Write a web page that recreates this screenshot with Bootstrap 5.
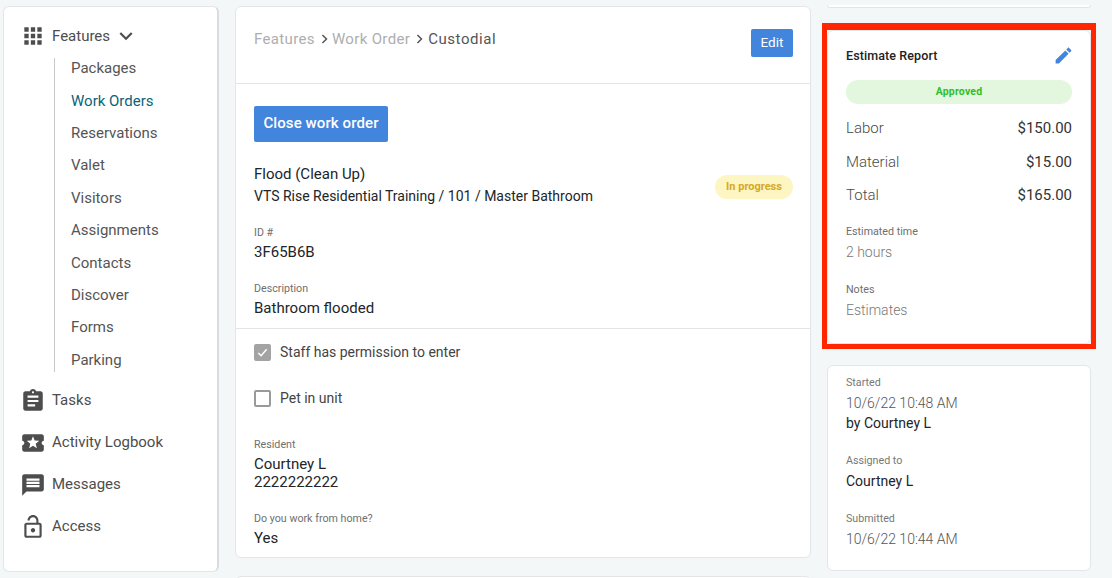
<!DOCTYPE html>
<html lang="en">
<head>
<meta charset="UTF-8">
<title>Work Order</title>
<link href="https://cdn.jsdelivr.net/npm/bootstrap@5.3.0/dist/css/bootstrap.min.css" rel="stylesheet">
<style>
html, body { height: 578px; overflow: hidden; }
body { background: #f4f7f8; font-family: Roboto, "Liberation Sans", sans-serif; font-size: 15px; color: #212529; }
.page-wrap { padding: 6px 0 0 3px; gap: 16px; height: 578px; overflow: hidden; }
.card { border-color: #e3e6e8; border-radius: 6px; }

.side-col { width: 216px; height: 566px; flex: none; border-right: 2px solid #d8dcde; }
.side-nav { padding: 17px 0 0 16px; }
.side-item { display: flex; align-items: center; gap: 6px; height: 24px; color: #4d4d4d; margin-bottom: 18px; }
.side-item svg { fill: #4d4d4d; width: 26px; height: 26px; flex: none; }
.side-item.open { margin-bottom: 0; }
.side-item.open svg.chev { margin-left: -3px; }
.sub-list { margin: 10.2px 0 17px 34px; padding-left: 16px; border-left: 1px solid #c4c8ca; list-style: none; }
.sub-list li { height: 32.4px; line-height: 20px; color: #555; }
.sub-list li:last-child { height: 22px; }
.sub-list li.current { color: #0b6379; }

.main-col { width: 576px; flex: none; }
.main-card { height: 552px; }
.crumb-bar { height: 77px; padding: 22px 17px 0 18px; border-bottom: 1px solid #e3e6e8; }
.crumb { line-height: 22px; margin-top: -1px; color: #aeaeae; letter-spacing: .35px; display: flex; align-items: center; gap: 4px; }
.crumb b { font-weight: 400; color: #555; letter-spacing: .55px; margin-left: 1px; }
.crumb svg { width: 10px; height: 10px; fill: #555; margin-right: -1px; }
.btn-blue { background: #4285dc; border: 0; color: #fff; border-radius: 2px; }
.btn-edit { width: 42px; height: 28px; font-size: 13.5px; padding: 0 0 2px; }
.btn-close-wo { width: 134px; height: 36px; padding: 0 0 2px; font-size: 15px; font-weight: 500; letter-spacing: .1px; }
.body-top { padding: 22px 17px 0 18px; height: 244px; }
.wo-title { margin-top: 22px; }
.wo-title .t1 { line-height: 20px; }
.wo-title .t2 { line-height: 22px; font-size: 14px; margin-top: 1px; }
.pill-wait { width: 78px; height: 24px; background: #fdf6c3; color: #d8a822; font-size: 11px; font-weight: 700; border-radius: 12px; margin-top: 11px; display: flex; align-items: center; justify-content: center; }
.lbl { font-size: 10.7px; color: #6f6f6f; line-height: 14px; }
.val { line-height: 20px; margin-top: 2px; }
.lbl-id { margin-top: 19px; }
.lbl-desc { margin-top: 20px; }
.body-low { border-top: 1px solid #e3e6e8; padding: 14px 18px 0; }
.chk-row { display: flex; align-items: center; gap: 9px; height: 18px; font-size: 14px; color: #444; }
.chk-row + .chk-row { margin-top: 28px; }
.chk-box { width: 17px; height: 17px; border: 2px solid #9a9a9a; border-radius: 2px; background: #fff; display: block; flex: none; }
.chk-box.on { background: #a3a3a3; border-color: #a3a3a3; }
.chk-box svg { display: block; width: 13px; height: 13px; fill: none; stroke: #fff; stroke-width: 1.6; }
.lbl-res { margin-top: 31px; }
.val-res { line-height: 18px; margin-top: 3px; }
.lbl-home { margin-top: 21px; }
.next-card { height: 12px; margin-top: 18px; }

.right-col { width: 274px; flex: none; margin-left: -5px; font-size: 14px; }
.sliver { height: 3px; margin: -1px 5px 15px; background: #fff; border: 1px solid #e3e6e8; border-top: 0; border-radius: 0 0 3px 3px; }
.red-frame { border: 5px solid #ff2600; border-top-width: 7px; height: 326px; }
.red-frame .card { height: 314px; padding: 16px 18px 0; }
.est-head { font-size: 12.5px; font-weight: 500; color: #222; height: 17px; letter-spacing: .1px; }
.est-head svg { width: 21px; height: 21px; fill: #4285dc; margin-top: -2px; margin-right: -2px; }
.pill-ok { height: 24px; margin-top: 16px; margin-bottom: 14px; background: #e2f7de; color: #2fbf2b; font-size: 10.5px; font-weight: 700; border-radius: 12px; display: flex; align-items: center; justify-content: center; letter-spacing: .2px; }
.cost-row { display: flex; justify-content: space-between; line-height: 20px; margin-bottom: 13.5px; font-size: 15px; }
.cost-row .nm { color: #4a4a4a; font-weight: 300; }
.cost-row .am { color: #333; }
.soft { color: #777; font-weight: 300; line-height: 20px; margin-top: 3px; }
.lbl-est { margin-top: 6px; }
.lbl-notes { margin-top: 21px; }
.side-info { margin: 16px 5px 0; height: 206px; padding: 10px 18px 0; }
.side-info .lbl { color: #777; }
.date { color: #555; font-weight: 300; line-height: 20px; margin-top: 3px; }
.side-info .val { margin-top: 0; }
.side-info .lbl-gap { margin-top: 21px; }
.side-info .val-gap { margin-top: 3px; }
</style>
</head>
<body>
<div class="d-flex page-wrap">

  <aside class="card side-col">
    <div class="side-nav">
      <div class="side-item open">
        <svg viewBox="0 0 24 24"><path d="M4 8h4V4H4v4zm6 12h4v-4h-4v4zm-6 0h4v-4H4v4zm0-6h4v-4H4v4zm6 0h4v-4h-4v4zm6-10v4h4V4h-4zm-6 4h4V4h-4v4zm6 6h4v-4h-4v4zm0 6h4v-4h-4v4z"/></svg>
        <span>Features</span>
        <svg class="chev" viewBox="0 0 24 24"><path d="M16.59 8.59L12 13.17 7.41 8.59 6 10l6 6 6-6z"/></svg>
      </div>
      <ul class="sub-list">
        <li>Packages</li>
        <li class="current">Work Orders</li>
        <li>Reservations</li>
        <li>Valet</li>
        <li>Visitors</li>
        <li>Assignments</li>
        <li>Contacts</li>
        <li>Discover</li>
        <li>Forms</li>
        <li>Parking</li>
      </ul>
      <div class="side-item">
        <svg viewBox="0 0 24 24"><path d="M19 3h-4.18C14.4 1.84 13.3 1 12 1c-1.3 0-2.4.84-2.82 2H5c-1.1 0-2 .9-2 2v14c0 1.1.9 2 2 2h14c1.1 0 2-.9 2-2V5c0-1.1-.9-2-2-2zm-7 0c.55 0 1 .45 1 1s-.45 1-1 1-1-.45-1-1 .45-1 1-1zm2 14H7v-2h7v2zm3-4H7v-2h10v2zm0-4H7V7h10v2z"/></svg>
        <span>Tasks</span>
      </div>
      <div class="side-item">
        <svg viewBox="0 0 24 24"><path d="M20 12c0-1.1.9-2 2-2V6c0-1.1-.9-2-2-2H4c-1.1 0-1.99.9-1.99 2v4c1.1 0 1.99.9 1.99 2s-.89 2-2 2v4c0 1.1.9 2 2 2h16c1.1 0 2-.9 2-2v-4c-1.1 0-2-.9-2-2zm-4.42 4.8L12 14.5l-3.58 2.3 1.08-4.12-3.29-2.69 4.24-.25L12 5.8l1.54 3.95 4.24.25-3.29 2.69 1.09 4.11z"/></svg>
        <span>Activity Logbook</span>
      </div>
      <div class="side-item">
        <svg viewBox="0 0 24 24"><path d="M20 2H4c-1.1 0-1.99.9-1.99 2L2 22l4-4h14c1.1 0 2-.9 2-2V4c0-1.1-.9-2-2-2zm-2 12H6v-2h12v2zm0-3H6V9h12v2zm0-3H6V6h12v2z"/></svg>
        <span>Messages</span>
      </div>
      <div class="side-item">
        <svg viewBox="0 0 24 24"><path d="M12 17c1.1 0 2-.9 2-2s-.9-2-2-2-2 .9-2 2 .9 2 2 2zm6-9h-1V6c0-2.76-2.24-5-5-5S7 3.24 7 6h1.9c0-1.71 1.39-3.1 3.1-3.1 1.71 0 3.1 1.39 3.1 3.1v2H6c-1.1 0-2 .9-2 2v10c0 1.1.9 2 2 2h12c1.1 0 2-.9 2-2V10c0-1.1-.9-2-2-2zm0 12H6V10h12v10z"/></svg>
        <span>Access</span>
      </div>
    </div>
  </aside>

  <main class="main-col">
    <div class="card main-card">
      <div class="crumb-bar d-flex justify-content-between align-items-start">
        <div class="crumb"><span>Features</span>
          <svg viewBox="0 0 24 24"><path d="M7 3.5L9.5 1l11 11-11 11L7 20.500 15.500 12z"/></svg>
          <span>Work Order</span>
          <svg viewBox="0 0 24 24"><path d="M7 3.5L9.500 1l11 11-11 11L7 20.500 15.500 12z"/></svg>
          <b>Custodial</b></div>
        <button class="btn btn-blue btn-edit" type="button">Edit</button>
      </div>
      <div class="body-top">
        <button class="btn btn-blue btn-close-wo" type="button">Close work order</button>
        <div class="wo-title d-flex justify-content-between">
          <div>
            <div class="t1">Flood (Clean Up)</div>
            <div class="t2">VTS Rise Residential Training / 101 / Master Bathroom</div>
          </div>
          <div class="pill-wait">In progress</div>
        </div>
        <div class="lbl lbl-id">ID #</div>
        <div class="val">3F65B6B</div>
        <div class="lbl lbl-desc">Description</div>
        <div class="val">Bathroom flooded</div>
      </div>
      <div class="body-low">
        <div class="chk-row"><span class="chk-box on"><svg viewBox="0 0 14 14"><path d="M2.500 7.500l3 3 6-7"/></svg></span>Staff has permission to enter</div>
        <div class="chk-row"><span class="chk-box"></span>Pet in unit</div>
        <div class="lbl lbl-res">Resident</div>
        <div class="val-res">Courtney L<br>2222222222</div>
        <div class="lbl lbl-home">Do you work from home?</div>
        <div class="val">Yes</div>
      </div>
    </div>
    <div class="card next-card"></div>
  </main>

  <section class="right-col">
    <div class="sliver"></div>
    <div class="red-frame">
      <div class="card">
        <div class="est-head d-flex justify-content-between">
          <span>Estimate Report</span>
          <svg viewBox="0 0 24 24"><path d="M3 17.250V21h3.750L17.810 9.940l-3.750-3.750L3 17.250zM20.710 7.040c.390-.390.390-1.020 0-1.410l-2.340-2.340c-.390-.390-1.020-.390-1.410 0l-1.830 1.830 3.750 3.750 1.830-1.830z"/></svg>
        </div>
        <div class="pill-ok">Approved</div>
        <div class="cost-row"><span class="nm">Labor</span><span class="am">$150.00</span></div>
        <div class="cost-row"><span class="nm">Material</span><span class="am">$15.00</span></div>
        <div class="cost-row"><span class="nm">Total</span><span class="am">$165.00</span></div>
        <div class="lbl lbl-est">Estimated time</div>
        <div class="soft">2 hours</div>
        <div class="lbl lbl-notes">Notes</div>
        <div class="soft">Estimates</div>
      </div>
    </div>
    <div class="card side-info">
      <div class="lbl">Started</div>
      <div class="date">10/6/22 10:48 AM</div>
      <div class="val">by Courtney L</div>
      <div class="lbl lbl-gap">Assigned to</div>
      <div class="val val-gap">Courtney L</div>
      <div class="lbl lbl-gap">Submitted</div>
      <div class="date">10/6/22 10:44 AM</div>
    </div>
  </section>
</div>
<script src="https://cdn.jsdelivr.net/npm/bootstrap@5.3.0/dist/js/bootstrap.bundle.min.js"></script>
</body>
</html>
